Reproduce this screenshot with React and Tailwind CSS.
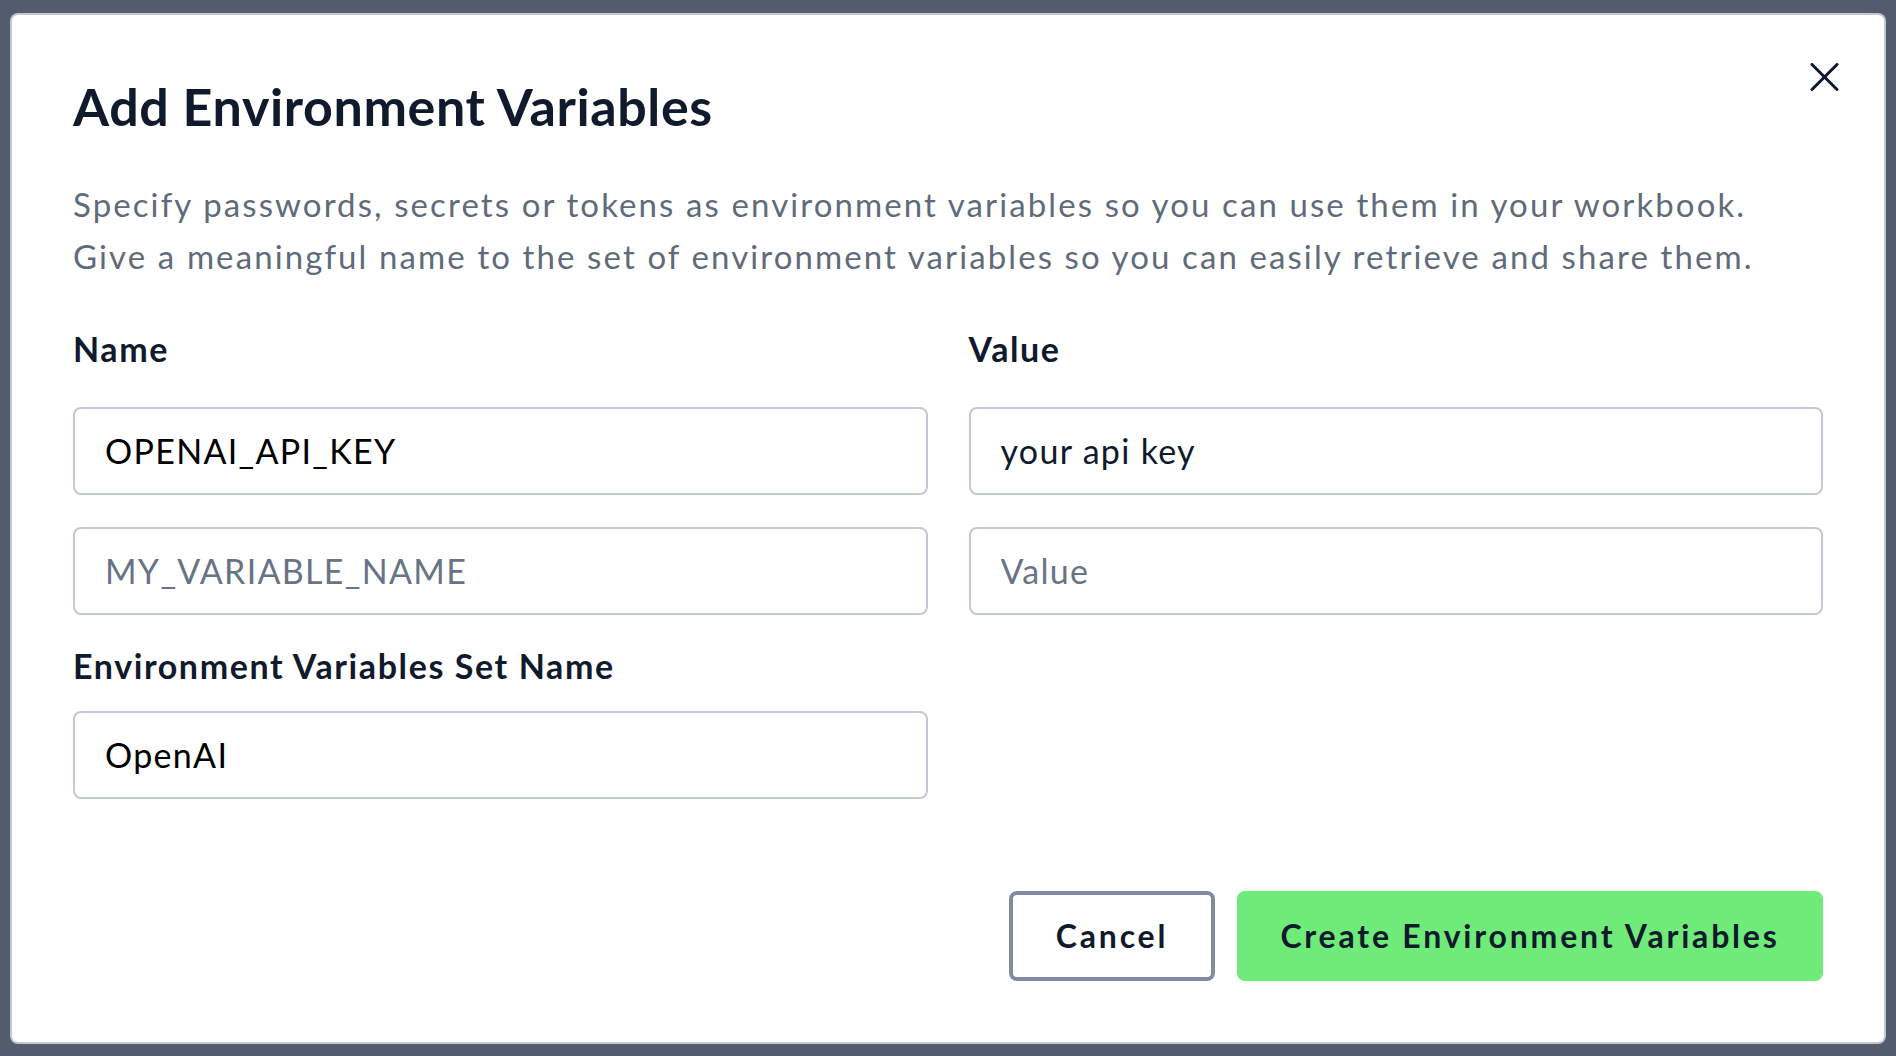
import React from "react";

function Field({ value, placeholder, valueClass = "text-black" }) {
  return (
    <div className="h-[88px] w-full rounded-[8px] border-2 border-[#c3c8d5] bg-white flex items-center px-[30px]">
      <input
        readOnly
        defaultValue={value}
        placeholder={placeholder}
        className={`w-full bg-transparent outline-none text-[34px] leading-[40px] tracking-[1.3px] ${valueClass} placeholder:text-[#687385]`}
      />
    </div>
  );
}

export default function App() {
  return (
    <div
      className="w-full h-[1056px] bg-[#525c6c] flex items-center justify-center"
      style={{ fontFamily: "Lato, 'Noto Sans', sans-serif" }}
    >
      <div className="relative w-[1872px] h-[1027px] bg-white rounded-[6px] ring-2 ring-[#c3c7d2] flex flex-col px-[61px] pt-[59px] pb-[61px]">
        <button className="absolute top-[48px] right-[45px] w-[29px] h-[28px] text-[#0f1a2c]" aria-label="Close">
          <svg width="29" height="28" viewBox="0 0 29 28" fill="none">
            <line x1="2" y1="1.5" x2="27" y2="26.5" stroke="currentColor" strokeWidth="3" strokeLinecap="round" />
            <line x1="27" y1="1.5" x2="2" y2="26.5" stroke="currentColor" strokeWidth="3" strokeLinecap="round" />
          </svg>
        </button>

        <h1 className="text-[52px] leading-[64px] font-bold tracking-[0.6px] text-[#0f1a2c]">Add Environment Variables</h1>

        <p className="mt-[40px] text-[33px] leading-[52px] tracking-[2.1px] text-[#5f6b7a]">
          Specify passwords, secrets or tokens as environment variables so you can use them in your workbook.
          <br />
          Give a meaningful name to the set of environment variables so you can easily retrieve and share them.
        </p>

        <div className="mt-[47px] grid grid-cols-2 gap-x-[41px]">
          <div className="text-[34px] leading-[40px] font-bold tracking-[1.6px] text-[#0f1a2c]">Name</div>
          <div className="text-[34px] leading-[40px] font-bold tracking-[1.6px] text-[#0f1a2c]">Value</div>

          <div className="mt-[38px]">
            <Field value="OPENAI_API_KEY" />
          </div>
          <div className="mt-[38px]">
            <Field value="your api key" valueClass="text-[#0f1a2c]" />
          </div>

          <div className="mt-[32px]">
            <Field placeholder="MY_VARIABLE_NAME" />
          </div>
          <div className="mt-[32px]">
            <Field placeholder="Value" />
          </div>

          <div className="mt-[31px] text-[34px] leading-[40px] font-bold tracking-[1.6px] text-[#0f1a2c]">
            Environment Variables Set Name
          </div>
          <div />

          <div className="mt-[25px]">
            <Field value="OpenAI" />
          </div>
          <div />
        </div>

        <div className="mt-auto flex justify-end gap-[22px]">
          <button className="w-[206px] h-[90px] rounded-[8px] border-4 border-[#8488a3] bg-white text-[32px] font-bold tracking-[2.8px] text-[#0f1a2c] flex items-center justify-center">
            Cancel
          </button>
          <button className="w-[586px] h-[90px] rounded-[8px] bg-[#6eeb78] text-[32px] font-bold tracking-[2.8px] text-[#0f1a2c] flex items-center justify-center">
            Create Environment Variables
          </button>
        </div>
      </div>
    </div>
  );
}
